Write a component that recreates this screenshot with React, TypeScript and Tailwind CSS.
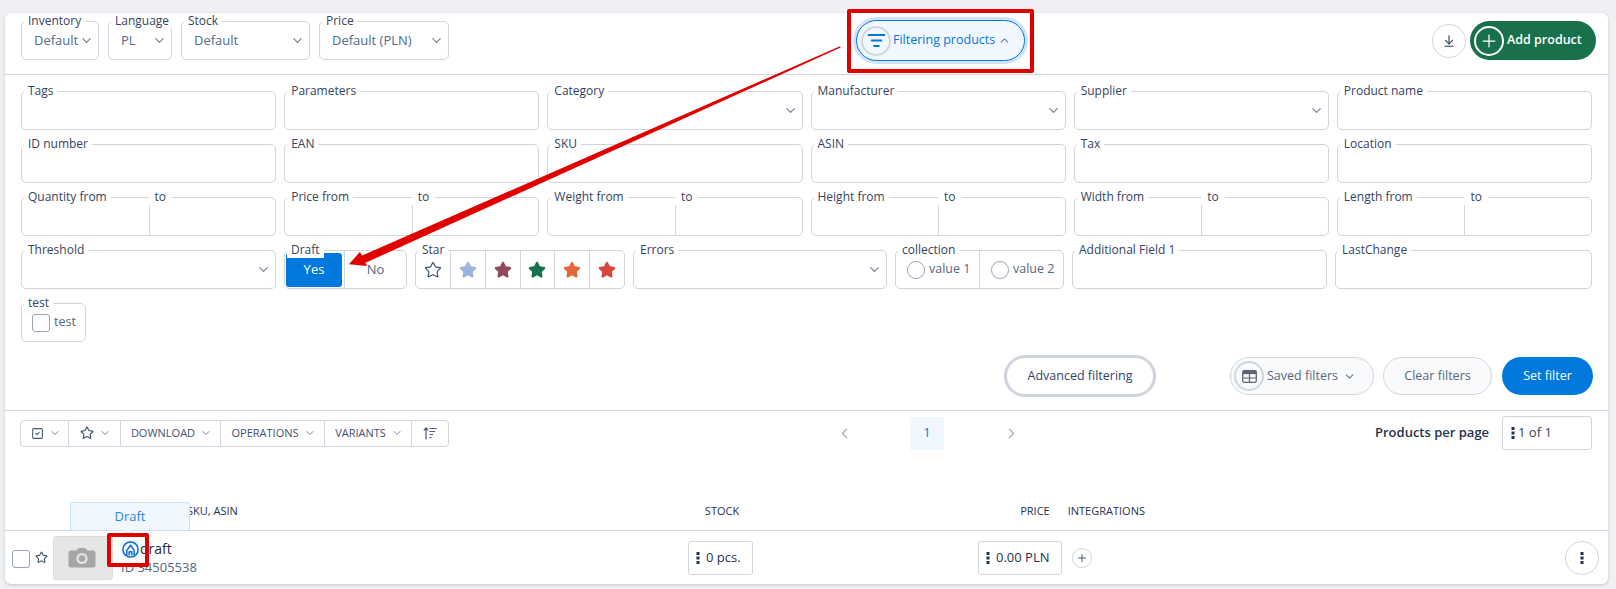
import { ArrowDownToLine, ChevronDown, ChevronLeft, ChevronRight, ChevronUp, ListFilter, Plus, SquareCheck, Star } from "lucide-react";
import type { ReactNode } from "react";

const font = { fontFamily: '"Open Sans", "Noto Sans", sans-serif' };

const Dots = ({ className = "" }: { className?: string }) => (
  <svg width="4" height="14" viewBox="0 0 4 14" className={className}>
    <rect x="0.5" y="1" width="3" height="3" fill="#1f3350" />
    <rect x="0.5" y="5.5" width="3" height="3" fill="#1f3350" />
    <rect x="0.5" y="10" width="3" height="3" fill="#1f3350" />
  </svg>
);

// box with its label sitting on the top border
const Field = ({ label, className = "", children }: { label: string; className?: string; children?: ReactNode }) => (
  <div className={`relative h-[39px] rounded-[5px] border border-[#d0d5de] bg-white ${className}`}>
    <span className="absolute -top-[9px] left-[2px] bg-white px-1 text-[12px] leading-4 text-[#33445f]">{label}</span>
    {children}
  </div>
);

const SelectField = ({ label, value, className = "" }: { label: string; value?: string; className?: string }) => (
  <Field label={label} className={className}>
    <div className="flex h-full items-center justify-between pl-3 pr-1">
      <span className="text-[13px] text-[#4f6b8f]">{value}</span>
      <ChevronDown size={15} color="#7a8699" />
    </div>
  </Field>
);

const RangeField = ({ label }: { label: string }) => (
  <Field label={label}>
    <div className="ml-[50%] h-full border-l border-[#d0d5de]" />
    <span className="absolute -top-[9px] left-[50%] bg-white px-[6px] text-[12px] leading-4 text-[#33445f]">to</span>
  </Field>
);

const ToolbarCell = ({ className, children }: { className: string; children: ReactNode }) => (
  <div className={`flex h-full items-center justify-center gap-[5px] border-r border-[#d0d5de] pl-[2px] text-[11px] text-[#3f5170] last:border-r-0 ${className}`}>
    {children}
  </div>
);

const starColors = ["#9db4e0", "#8f4a5c", "#15724a", "#e4683a", "#d9473b"];

const row1 = ["Tags", "Parameters", "Category", "Manufacturer", "Supplier", "Product name"];
const row2 = ["ID number", "EAN", "SKU", "ASIN", "Tax", "Location"];
const row3 = ["Quantity from", "Price from", "Weight from", "Height from", "Width from", "Length from"];
const withArrow = ["Category", "Manufacturer", "Supplier"];

export default function App() {
  return (
    <div className="relative min-h-[589px] overflow-hidden bg-[#eef0f3] pl-[5px] pr-2 pt-[13px]" style={font}>
      <div className="h-[571px] rounded-[6px] bg-white shadow-[0_1px_3px_rgba(0,0,0,0.18)]">
        {/* Top bar */}
        <div className="flex h-[62px] items-start border-b border-[#d0d5de] pl-4 pr-3 pt-2">
          <div className="flex gap-[9px]">
            <SelectField label="Inventory" value="Default" className="w-[78px]" />
            <SelectField label="Language" value="PL" className="w-[64px]" />
            <SelectField label="Stock" value="Default" className="w-[129px]" />
            <SelectField label="Price" value="Default (PLN)" className="w-[130px]" />
          </div>
          <div className="relative ml-[407px] mt-[-1px]">
            <div className="flex h-[41px] w-[169px] items-center rounded-full border border-[#0078dc] bg-[#f1f7fe] pl-[4px] shadow-[0_0_0_3px_#cfe4f8]">
              <span className="flex size-[30px] items-center justify-center rounded-full border-2 border-[#d0d5de]">
                <ListFilter size={19} color="#0078dc" strokeWidth={2.4} />
              </span>
              <span className="ml-[2px] text-[12.5px] font-medium text-[#0078dc]">Filtering products</span>
              <ChevronUp size={13} color="#5c88b5" className="ml-[3px]" />
            </div>
            <div className="absolute -inset-x-[9px] -bottom-[12px] -top-[11px] rounded-[2px] border-[4px] border-[#e00000]" />
          </div>
          <div className="ml-auto flex items-center gap-[4px]">
            <span className="flex size-[34px] items-center justify-center rounded-full border border-[#d0d5de]">
              <ArrowDownToLine size={14} color="#2f4468" />
            </span>
            <div className="flex h-[39px] w-[126px] items-center rounded-full bg-[#18714a] pl-[4px]">
              <span className="flex size-[30px] items-center justify-center rounded-full border-2 border-white">
                <Plus size={20} color="white" strokeWidth={1.5} />
              </span>
              <span className="ml-[3px] text-[12.5px] font-semibold text-white">Add product</span>
            </div>
          </div>
        </div>

        {/* Filters */}
        <div className="flex flex-col gap-[14px] px-4 pt-[16px]">
          <div className="grid grid-cols-6 gap-x-2">
            {row1.map((l) =>
              withArrow.includes(l) ? <SelectField key={l} label={l} /> : <Field key={l} label={l} />
            )}
          </div>
          <div className="grid grid-cols-6 gap-x-2">
            {row2.map((l) => (
              <Field key={l} label={l} />
            ))}
          </div>
          <div className="grid grid-cols-6 gap-x-2">
            {row3.map((l) => (
              <RangeField key={l} label={l} />
            ))}
          </div>
          <div className="flex gap-2">
            <SelectField label="Threshold" className="w-[255px]" />
            <Field label="Draft" className="w-[123px]">
              <div className="flex h-full items-center">
                <div className="ml-[1px] flex h-[34px] w-[56px] items-center justify-center rounded-[3px] bg-[#0078dc] text-[13px] text-white">Yes</div>
                <div className="ml-[2px] flex h-full flex-1 items-center justify-center border-l border-[#d0d5de] text-[13px] text-[#556680]">No</div>
              </div>
              <span className="absolute -top-[9px] left-[2px] bg-white px-1 text-[12px] leading-4 text-[#33445f]">Draft</span>
            </Field>
            <Field label="Star" className="w-[210px]">
              <div className="flex h-full">
                <div className="flex w-[35px] items-center justify-center border-r border-[#d0d5de]">
                  <Star size={18} color="#3f5170" strokeWidth={1.6} />
                </div>
                {starColors.map((c) => (
                  <div key={c} className="flex flex-1 items-center justify-center border-r border-[#d0d5de] last:border-r-0">
                    <Star size={18} color={c} fill={c} />
                  </div>
                ))}
              </div>
            </Field>
            <SelectField label="Errors" className="w-[254px]" />
            <Field label="collection" className="w-[169px]">
              <div className="flex h-full text-[12.5px] text-[#556680]">
                <div className="flex w-[84px] items-center gap-[4px] border-r border-[#d0d5de] pl-[11px]">
                  <span className="size-[18px] shrink-0 rounded-full border border-[#9aa5b5]" />
                  value 1
                </div>
                <div className="flex flex-1 items-center gap-[4px] pl-[11px]">
                  <span className="size-[18px] shrink-0 rounded-full border border-[#9aa5b5]" />
                  value 2
                </div>
              </div>
            </Field>
            <Field label="Additional Field 1" className="w-[255px]" />
            <Field label="LastChange" className="flex-1" />
          </div>
          <Field label="test" className="w-[65px]">
            <div className="flex h-full items-center gap-[4px] pl-[10px] text-[12.5px] text-[#556680]">
              <span className="size-[18px] shrink-0 rounded-[3px] border border-[#9aa5b5]" />
              test
            </div>
          </Field>
        </div>

        {/* Filter buttons */}
        <div className="mt-[13px] flex h-[42px] items-center pl-[999px] pr-[15px]">
          <div className="flex h-[42px] w-[152px] items-center justify-center rounded-full border-[3px] border-[#cfd4dc] text-[12.5px] font-medium text-[#2f4468]">
            Advanced filtering
          </div>
          <div className="ml-[74px] flex h-[38px] w-[144px] items-center rounded-full border border-[#d0d5de] bg-[#f9fafb] pl-[3px] text-[12.5px] text-[#556680]">
            <span className="flex size-[30px] items-center justify-center rounded-full border-2 border-[#d0d5de]">
              <svg width="15" height="13" viewBox="0 0 15 13">
                <rect x="0.7" y="0.7" width="13.6" height="11.6" rx="1.5" fill="none" stroke="#5a6475" strokeWidth="1.3" />
                <rect x="0.7" y="0.7" width="13.6" height="3.4" fill="#5a6475" />
                <path d="M7.5 4v8M1 8h13" stroke="#5a6475" strokeWidth="1.2" />
              </svg>
            </span>
            <span className="ml-[3px]">Saved filters</span>
            <ChevronDown size={13} color="#6d7a8c" className="ml-[5px]" />
          </div>
          <div className="ml-[9px] flex h-[38px] w-[109px] items-center justify-center rounded-full border border-[#d0d5de] bg-[#f9fafb] text-[12.5px] text-[#556680]">
            Clear filters
          </div>
          <div className="ml-[10px] flex h-[38px] w-[91px] items-center justify-center rounded-full bg-[#0078dc] text-[12.5px] font-medium text-white">
            Set filter
          </div>
        </div>

        {/* Toolbar and pagination */}
        <div className="mt-[13px] border-t border-[#d0d5de]">
          <div className="mt-[5px] flex h-[34px] items-center pl-[15px] pr-[16px]">
            <div className="flex h-[27px] w-[429px] items-center rounded-[4px] border border-[#d0d5de]">
              <ToolbarCell className="w-[48px]">
                <SquareCheck size={13} color="#4a5b78" />
                <ChevronDown size={12} color="#7a8699" />
              </ToolbarCell>
              <ToolbarCell className="w-[52px]">
                <Star size={14} color="#3f5170" />
                <ChevronDown size={12} color="#7a8699" />
              </ToolbarCell>
              <ToolbarCell className="w-[100px]">
                DOWNLOAD <ChevronDown size={12} color="#7a8699" />
              </ToolbarCell>
              <ToolbarCell className="w-[104px]">
                OPERATIONS <ChevronDown size={12} color="#7a8699" />
              </ToolbarCell>
              <ToolbarCell className="w-[87px]">
                VARIANTS <ChevronDown size={12} color="#7a8699" />
              </ToolbarCell>
              <ToolbarCell className="flex-1">
                <svg width="14" height="13" viewBox="0 0 14 13" fill="none" stroke="#4a5b78" strokeWidth="1.2" className="-ml-[2px]">
                  <path d="M3 12.5V1M.8 3.4 3 1l2.2 2.4M6.5 1.5h7M6.5 4.5h5.5M6.5 7.5h3.5M6.5 10.5h2" />
                </svg>
              </ToolbarCell>
            </div>
            <ChevronLeft size={17} color="#a9b2bf" className="ml-[387px]" />
            <div className="ml-[57px] flex h-[33px] w-[34px] items-center justify-center bg-[#f1f7fe] text-[13px] text-[#0078dc]">1</div>
            <ChevronRight size={17} color="#a9b2bf" className="ml-[59px]" />
            <span className="ml-[355px] text-[13px] font-semibold text-[#1f3350]">Products per page</span>
            <div className="ml-auto flex h-[34px] w-[90px] items-center gap-[3px] rounded-[3px] border border-[#d0d5de] pl-[8px] text-[13px] text-[#33445f]">
              <Dots />1 of 1
            </div>
          </div>

          {/* Table header */}
          <div className="mt-[42px] flex h-[39px] items-center border-b border-[#d0d5de] text-[11px] font-medium text-[#1f3350]">
            <span className="ml-[182px]">SKU, ASIN</span>
            <span className="ml-[467px]">STOCK</span>
            <span className="ml-[281px]">PRICE</span>
            <span className="ml-[18px]">INTEGRATIONS</span>
          </div>

          {/* Product row */}
          <div className="relative flex h-[53px] items-center pl-[7px]">
            <div className="absolute -top-[29px] left-[65px] flex h-[29px] w-[120px] items-center justify-center rounded-[3px] border border-[#cfe3f7] bg-[#f1f7fe] text-[13px] text-[#1f86e0]">
              Draft
              <span className="absolute -bottom-[4px] left-[54px] size-[7px] rotate-45 border-b border-r border-[#cfe3f7] bg-[#f1f7fe]" />
            </div>
            <span className="mt-[3px] size-[18px] shrink-0 rounded-[3px] border border-[#9aa5b5]" />
            <Star size={13} color="#3f5170" className="ml-[5px] shrink-0" />
            <div className="ml-[5px] flex h-[44px] w-[60px] shrink-0 items-center justify-center rounded-[3px] border border-[#dcdcda] bg-[#e6e6e4]">
              <svg width="28" height="21" viewBox="0 0 28 21" className="-ml-[2px]">
                <path d="M3 3.5h5.5L10.5 1h7l2 2.5H25a2.5 2.5 0 0 1 2.5 2.5v12a2.5 2.5 0 0 1-2.5 2.5H3A2.5 2.5 0 0 1 .5 18V6A2.5 2.5 0 0 1 3 3.5z" fill="#a6a6a4" />
                <circle cx="14" cy="11.5" r="5.6" fill="#e6e6e4" />
                <circle cx="14" cy="11.5" r="3.3" fill="#a6a6a4" />
              </svg>
            </div>
            <div className="relative ml-[8px] w-[567px] shrink-0">
              <div className="flex items-center text-[14px] leading-5 text-[#1f2a3d]">
                <span className="flex size-[18px] items-center justify-center bg-[#eef5fc]">
                  <svg width="17" height="17" viewBox="0 0 17 17" fill="none" stroke="#0f70c8">
                    <circle cx="8.5" cy="8.5" r="7.6" strokeWidth="1.5" />
                    <path d="M4.8 14.2V9.4L8.5 4.3l3.7 5.1v4.8M7.2 14.2v-3.4h2.6v3.4" strokeWidth="1.5" strokeLinejoin="round" />
                  </svg>
                </span>
                <span className="ml-[1px]">draft</span>
              </div>
              <div className="text-[13px] leading-[17px] text-[#556680]">ID 34505538</div>
              <div className="absolute -left-[14px] -top-[6px] h-[34px] w-[42px] rounded-[2px] border-[4px] border-[#e00000]" />
            </div>
            <div className="flex h-[34px] w-[65px] shrink-0 items-center gap-[6px] rounded-[3px] border border-[#d0d5de] pl-[7px] text-[13px] text-[#1f3350]">
              <Dots />0 pcs.
            </div>
            <div className="ml-[225px] flex h-[34px] w-[84px] shrink-0 items-center gap-[6px] rounded-[3px] border border-[#d0d5de] pl-[7px] text-[13px] text-[#1f3350]">
              <Dots />0.00 PLN
            </div>
            <span className="ml-[10px] flex size-[20px] shrink-0 items-center justify-center rounded-full border border-[#d0d5de]">
              <Plus size={12} color="#4a5b78" />
            </span>
            <span className="ml-auto mr-[9px] flex size-[34px] shrink-0 items-center justify-center rounded-full border border-[#d0d5de]">
              <Dots />
            </span>
          </div>
        </div>
      </div>

      {/* Red annotation arrow */}
      <svg className="pointer-events-none absolute left-0 top-0" width="1616" height="589" viewBox="0 0 1616 589">
        <polygon points="840,46.3 840.6,47.6 365,263 361,256" fill="#e00000" />
        <polygon points="349,264.3 360,251.7 367,266" fill="#e00000" />
      </svg>
    </div>
  );
}
